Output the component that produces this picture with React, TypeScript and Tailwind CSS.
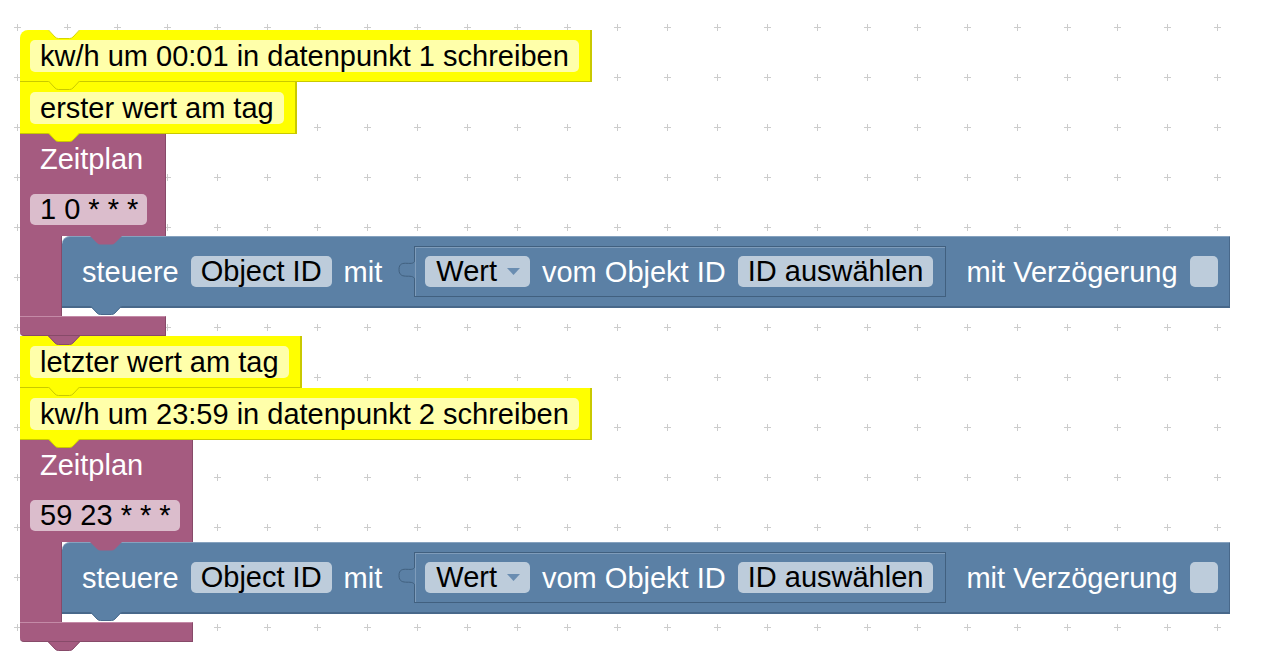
import React from 'react'

// Blockly-ähnlicher Arbeitsbereich mit zwei Zeitplan-Stapeln

type TabProps = {
  fill: string
  stroke?: string
  className?: string
}

// Verbindungsnase unten an einem Block (ragt in den nächsten Block hinein)
function Tab({ fill, stroke, className = '' }: TabProps) {
  return (
    <svg
      width="32"
      height="9"
      viewBox="0 0 32 9"
      className={`absolute left-[28px] z-10 ${className}`}
    >
      <path d="M0 0 L7 7 Q8.5 8.5 10.5 8.5 H21.5 Q23.5 8.5 25 7 L32 0 Z" fill={fill} />
      {stroke && (
        <path
          d="M0.5 0 L7 7 Q8.5 8.5 10.5 8.5 H21.5 Q23.5 8.5 25 7 L31.5 0"
          fill="none"
          stroke={stroke}
          strokeWidth="1"
        />
      )}
    </svg>
  )
}

function Comment({ text, first }: { text: string; first?: boolean }) {
  return (
    <div
      className={`relative w-fit border-r-2 border-b border-[#c9c900] bg-[#ffff00] pt-[10px] pr-[11px] pb-[9px] pl-[10px] ${
        first ? 'rounded-tl-[8px]' : ''
      }`}
    >
      {first && <Tab fill="#ffffff" stroke="#d6d600" className="top-0" />}
      <div className="h-[32px] rounded-[5px] bg-[#ffffaa] px-[10px] leading-[32px] text-black">
        {text}
      </div>
      <Tab fill="#ffff00" stroke="#c9c900" className="-bottom-[9px]" />
    </div>
  )
}

function BlueField({ children }: { children: React.ReactNode }) {
  return (
    <div className="flex h-[31px] items-center rounded-[5px] bg-[#bdccdb] px-[10px] leading-[31px] text-black">
      {children}
    </div>
  )
}

function SetState() {
  return (
    <div className="relative flex h-[72px] w-max items-center gap-[12px] rounded-tl-[8px] border-t border-r border-b-2 border-t-[#86a2bf] border-r-[#48688a] border-b-[#48688a] bg-[#5b80a5] pr-[11px] pl-[20px] leading-[32px] text-white">
      <span>steuere</span>
      <BlueField>Object ID</BlueField>
      <span>mit</span>
      <div className="relative ml-[20px] flex h-[51px] items-center gap-[12px] border border-[#41607f] bg-[#5b80a5] pr-[12px] pl-[10px] shadow-[inset_1px_1px_0_#7f9cba]">
        {/* Puzzle-Nase des eingesteckten Wertblocks */}
        <svg
          width="17"
          height="30"
          viewBox="0 0 17 30"
          className="absolute top-[8px] -left-[17px]"
        >
          <path
            d="M17 0 V4 C17 14 1 2 1 14.5 S17 16 17 26 V30 Z"
            fill="#5b80a5"
          />
          <path
            d="M17 4 C17 14 1 2 1 14.5 S17 16 17 26"
            fill="none"
            stroke="#41607f"
            strokeWidth="1"
          />
        </svg>
        <div className="flex h-[31px] items-center rounded-[5px] bg-[#bdccdb] pr-[10px] pl-[11px] leading-[31px] text-black">
          <span>Wert</span>
          <svg width="13" height="7" viewBox="0 0 13 7" className="ml-[10px]">
            <path d="M0 0 H13 L6.5 7 Z" fill="#6a8db1" />
          </svg>
        </div>
        <span>vom Objekt ID</span>
        <BlueField>ID auswählen</BlueField>
      </div>
      <span className="ml-[8px]">mit Verzögerung</span>
      <div className="h-[31px] w-[28px] rounded-[5px] bg-[#bdccdb]" />
      <Tab fill="#5b80a5" stroke="#48688a" className="-bottom-[9px]" />
    </div>
  )
}

function Schedule({ cron }: { cron: string }) {
  return (
    <div className="relative flex w-fit flex-col text-white">
      <div className="border-r border-[#874a69] bg-[#a55b80] pt-[9px] pb-[11px]">
        <div className="pr-[22px] pl-[20px] leading-[32px]">Zeitplan</div>
        <div className="mt-[19px] pr-[12px] pl-[10px]">
          <div className="h-[31px] w-fit rounded-[5px] bg-[#dbbdcc] pr-[9px] pl-[10px] leading-[31px] text-black">
            {cron}
          </div>
        </div>
      </div>
      <div className="flex h-[80px]">
        <div className="w-[42px] border-r border-[#874a69] bg-[#a55b80]" />
        <div className="relative w-0">
          <Tab fill="#a55b80" className="top-0" />
          <SetState />
        </div>
      </div>
      <div className="h-[20px] rounded-bl-[4px] border-t border-r border-b border-t-[#c48aa7] border-r-[#874a69] border-b-[#874a69] bg-[#a55b80]" />
      <Tab fill="#a55b80" stroke="#874a69" className="-bottom-[9px]" />
    </div>
  )
}

export default function App() {
  return (
    <div className="relative h-[672px] w-full overflow-hidden bg-white font-['Liberation_Sans',Arial,sans-serif] text-[29px]">
      <svg className="absolute inset-0 h-full w-full">
        <defs>
          <pattern
            id="grid"
            width="50"
            height="50"
            x="-8"
            y="2"
            patternUnits="userSpaceOnUse"
          >
            <path d="M22 25.5 H29 M25.5 22 V29" stroke="#cccccc" strokeWidth="1" />
          </pattern>
        </defs>
        <rect width="100%" height="100%" fill="url(#grid)" />
      </svg>

      <div className="relative flex flex-col items-start pt-[30px] pl-[20px]">
        <Comment first text="kw/h um 00:01 in datenpunkt 1 schreiben" />
        <Comment text="erster wert am tag" />
        <Schedule cron="1 0 * * *" />
        <Comment text="letzter wert am tag" />
        <Comment text="kw/h um 23:59 in datenpunkt 2 schreiben" />
        <Schedule cron="59 23 * * *" />
      </div>
    </div>
  )
}
